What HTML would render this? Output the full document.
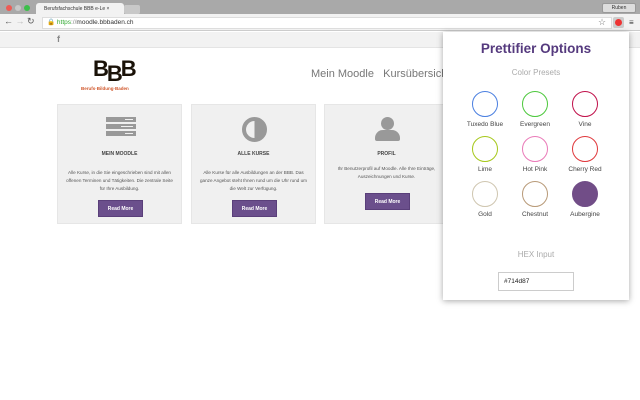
<!DOCTYPE html>
<html><head><meta charset="utf-8"><style>
*{margin:0;padding:0;box-sizing:border-box}
body{width:640px;height:400px;overflow:hidden;background:#fff;font-family:"Liberation Sans",sans-serif;position:relative}
.a{position:absolute}
.card{position:absolute;top:104px;width:125px;height:120px;background:#f0f0f0;border:1px solid #e6e6e6;text-align:center;color:#444}
.card h4{position:absolute;top:46px;width:100%;font-size:5px;font-weight:bold;color:#444}
.card p{position:absolute;top:64px;left:6px;right:6px;font-size:4.6px;line-height:8px;color:#555}
.card .btn{position:absolute;left:40px;width:45px;height:17px;background:#6b4f8c;color:#fff;font-size:5px;font-weight:bold;line-height:17px;border:1px solid #5a3f7a}
.c{position:absolute;width:26px;height:26px;border-radius:50%;border:1.3px solid}
.l{position:absolute;width:60px;text-align:center;font-size:6.5px;color:#444}
.bar{position:absolute;left:48px;width:30px;height:5px;background:#999}
.bar i{position:absolute;right:3px;top:2px;width:8px;height:1px;background:#f0f0f0}
</style></head><body>
<div class="a" style="left:0;top:0;width:640px;height:14px;background:#a9a9a9"></div>
<div class="a" style="left:6px;top:5px;width:6px;height:6px;border-radius:50%;background:#ee5b55"></div>
<div class="a" style="left:15px;top:5px;width:6px;height:6px;border-radius:50%;background:#c8c8c8"></div>
<div class="a" style="left:24px;top:5px;width:6px;height:6px;border-radius:50%;background:#3cbf4a"></div>
<div class="a" style="left:36px;top:3px;width:88px;height:12px;background:#f2f2f2;border-radius:3px 3px 0 0;font-size:5px;line-height:12px;padding-left:8px;color:#333">Berufsfachschule BBB e-Le ×</div>
<div class="a" style="left:124px;top:5px;width:16px;height:9px;background:#c8c8c8;border-radius:2px"></div>
<div class="a" style="left:602px;top:3px;width:34px;height:10px;background:#ddd;border:1px solid #999;border-radius:2px;font-size:5px;text-align:center;line-height:8px;color:#333">Ruben</div>
<div class="a" style="left:0;top:14px;width:640px;height:17px;background:#f2f2f2;border-bottom:1px solid #ccc"></div>
<div class="a" style="left:4px;top:16px;font-size:9px;color:#555">← <span style="color:#bbb">→</span> ↻</div>
<div class="a" style="left:42px;top:17px;width:570px;height:12px;background:#fff;border:1px solid #ddd;font-size:6.5px;line-height:10px;padding-left:4px;color:#333"><span style="color:#3a3">🔒 https</span><span style="color:#888">://</span>moodle.bbbaden.ch</div>
<div class="a" style="left:598px;top:17px;font-size:9px;color:#777">☆</div>
<div class="a" style="left:613px;top:17px;width:11px;height:11px;background:#ccc;border-radius:2px"></div>
<div class="a" style="left:615px;top:19px;width:7px;height:7px;border-radius:50%;background:#e33"></div>
<div class="a" style="left:629px;top:18px;font-size:8px;color:#333">≡</div>
<div class="a" style="left:0;top:32px;width:640px;height:16px;background:#f2f2f2;border-bottom:1px solid #e4e4e4"></div>
<div class="a" style="left:57px;top:34px;font-size:9px;color:#888;font-weight:bold">f</div>
<div class="a" style="left:93px;top:56px;font-size:22px;font-weight:bold;color:#1a1208;letter-spacing:-2px">B<span style="position:relative;top:5px">B</span>B</div>
<div class="a" style="left:81px;top:86px;font-size:4.5px;color:#d0562a;font-weight:bold">Berufs·Bildung·Baden</div>
<div class="a" style="left:311px;top:68px;font-size:11px;color:#777;white-space:nowrap">Mein Moodle &nbsp;&nbsp;Kursübersicht</div>
<div class="card" style="left:57px">
<div class="bar" style="top:12px"><i></i></div>
<div class="bar" style="top:19px"><i style="width:12px"></i></div>
<div class="bar" style="top:26px"><i></i></div>
<h4>MEIN MOODLE</h4><p>Alle Kurse, in die Sie eingeschrieben sind mit allen offenen Terminen und Tätigkeiten. Die zentrale Seite für Ihre Ausbildung.</p><div class="btn" style="top:95px">Read More</div></div>
<div class="card" style="left:191px">
<div class="a" style="left:50px;top:12px;width:25px;height:25px;border-radius:50%;border:4px solid #999;background:linear-gradient(90deg,#f0f0f0 50%,#999 50%)"></div>
<h4>ALLE KURSE</h4><p>Alle Kurse für alle Ausbildungen an der BBB. Das ganze Angebot steht Ihnen rund um die Uhr rund um die Welt zur Verfügung.</p><div class="btn" style="top:95px">Read More</div></div>
<div class="card" style="left:324px">
<div class="a" style="left:56px;top:12px;width:13px;height:13px;border-radius:50%;background:#999"></div>
<div class="a" style="left:50px;top:25px;width:25px;height:11px;border-radius:8px 8px 2px 2px;background:#999"></div>
<h4>PROFIL</h4><p style="top:60px">Ihr Benutzerprofil auf Moodle. Alle Ihre Einträge, Auszeichnungen und Kurse.</p><div class="btn" style="top:88px">Read More</div></div>
<div class="a" style="left:443px;top:32px;width:186px;height:268px;background:#fff;box-shadow:0 1px 6px rgba(0,0,0,.35)"></div>
<div class="a" style="left:443px;top:41px;width:186px;text-align:center;font-size:13.5px;font-weight:bold;color:#553a7e">Prettifier Options</div>
<div class="a" style="left:443px;top:68px;width:186px;text-align:center;font-size:8px;color:#aaa">Color Presets</div>
<div class="c" style="left:472px;top:91px;border-color:#4a7fe0"></div>
<div class="c" style="left:522px;top:91px;border-color:#4cc83c"></div>
<div class="c" style="left:572px;top:91px;border-color:#c0104a"></div>
<div class="c" style="left:472px;top:136px;border-color:#a6c81a"></div>
<div class="c" style="left:522px;top:136px;border-color:#ea7ab8"></div>
<div class="c" style="left:572px;top:136px;border-color:#e0383c"></div>
<div class="c" style="left:472px;top:181px;border-color:#cfc6b0"></div>
<div class="c" style="left:522px;top:181px;border-color:#b89a78"></div>
<div class="c" style="left:572px;top:181px;border-color:#714d87;background:#714d87"></div>
<div class="l" style="left:455px;top:121px">Tuxedo Blue</div>
<div class="l" style="left:505px;top:121px">Evergreen</div>
<div class="l" style="left:555px;top:121px">Vine</div>
<div class="l" style="left:455px;top:166px">Lime</div>
<div class="l" style="left:505px;top:166px">Hot Pink</div>
<div class="l" style="left:555px;top:166px">Cherry Red</div>
<div class="l" style="left:455px;top:211px">Gold</div>
<div class="l" style="left:505px;top:211px">Chestnut</div>
<div class="l" style="left:555px;top:211px">Aubergine</div>
<div class="a" style="left:443px;top:250px;width:186px;text-align:center;font-size:8px;color:#aaa">HEX Input</div>
<div class="a" style="left:498px;top:272px;width:76px;height:19px;border:1px solid #ccc;font-size:6.5px;line-height:17px;padding-left:5px;color:#222">#714d87</div>
</body></html>
